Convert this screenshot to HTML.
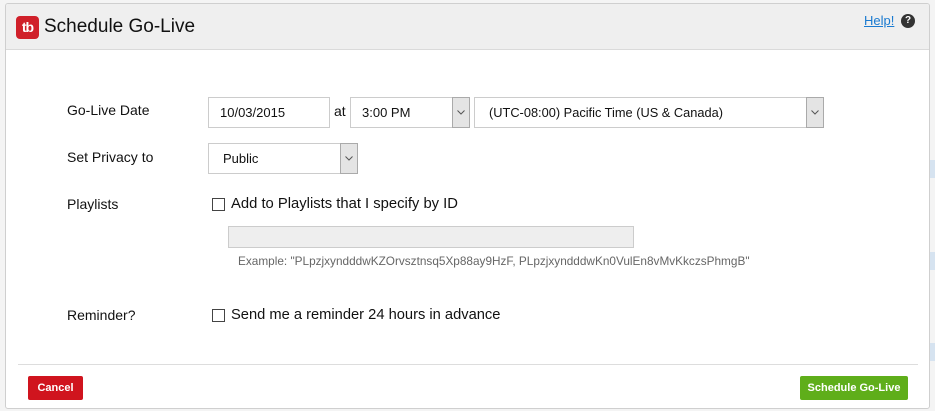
<!DOCTYPE html>
<html><head><meta charset="utf-8"><style>
*{box-sizing:border-box;margin:0;padding:0}
body{width:935px;height:411px;background:#f4f4f4;font-family:"Liberation Sans",Arial,sans-serif;position:relative;overflow:hidden;color:#111}
.dlg{position:absolute;left:5px;top:3px;width:925px;height:406px;background:#fff;border:1px solid #cfcfcf;border-radius:3px;overflow:hidden}
.hdr{position:absolute;left:0;top:0;right:0;height:46px;background:#efefef;border-bottom:1px solid #dadada}
.a{position:absolute}
.lbl{font-size:14px;color:#111}
.inp{position:absolute;border:1px solid #ccc;background:#fff;font-size:13px;padding-left:11px;display:flex;align-items:center}
.arr{position:absolute;right:-1px;top:-1px;bottom:-1px;width:18px;background:#e4e4e4;border:1px solid #aaa;display:flex;align-items:center;justify-content:center}
.cb{position:absolute;width:13px;height:13px;border:1px solid #444;background:#fff}
.btn{position:absolute;color:#fff;font-size:11px;font-weight:bold;display:flex;align-items:center;justify-content:center;border-radius:2px}
</style></head><body>
<div class="a" style="left:930px;top:160px;width:5px;height:18px;background:#d6e3f0"></div>
<div class="a" style="left:930px;top:252px;width:5px;height:18px;background:#d6e3f0"></div>
<div class="a" style="left:930px;top:343px;width:5px;height:18px;background:#d6e3f0"></div>
<div class="dlg">
<div class="hdr">
 <div class="a" style="left:10px;top:12px;width:23px;height:23px;background:#d0202a;border-radius:4px;color:#fff;font-weight:bold;font-size:14px;line-height:23px;text-align:center;letter-spacing:-1px">tb</div>
 <div class="a" style="left:38px;top:12px;font-size:19px;color:#111">Schedule Go-Live</div>
 <div class="a" style="left:858px;top:9px;font-size:13px;color:#1a7ad0;text-decoration:underline">Help!</div>
 <div class="a" style="left:895px;top:10px;width:14px;height:14px;border-radius:50%;background:#333;color:#fff;font-size:10px;font-weight:bold;text-align:center;line-height:14px">?</div>
</div>
<div class="a lbl" style="left:61px;top:98px">Go-Live Date</div>
<div class="a lbl" style="left:61px;top:145px">Set Privacy to</div>
<div class="a lbl" style="left:61px;top:192px">Playlists</div>
<div class="a lbl" style="left:61px;top:303px">Reminder?</div>
<div class="inp" style="left:202px;top:93px;width:122px;height:31px">10/03/2015</div>
<div class="a lbl" style="left:328px;top:99px">at</div>
<div class="inp" style="left:344px;top:93px;width:120px;height:31px">3:00 PM<div class="arr"><svg width="8" height="5"><path d="M0.5 0.5L4 4L7.5 0.5" fill="none" stroke="#555"/></svg></div></div>
<div class="inp" style="left:468px;top:93px;width:350px;height:31px;padding-left:14px;font-size:12.8px">(UTC-08:00) Pacific Time (US &amp; Canada)<div class="arr"><svg width="8" height="5"><path d="M0.5 0.5L4 4L7.5 0.5" fill="none" stroke="#555"/></svg></div></div>
<div class="inp" style="left:202px;top:139px;width:150px;height:31px;padding-left:14px">Public<div class="arr"><svg width="8" height="5"><path d="M0.5 0.5L4 4L7.5 0.5" fill="none" stroke="#555"/></svg></div></div>
<div class="cb" style="left:206px;top:194px"></div>
<div class="a lbl" style="left:225px;top:192px;font-size:14.8px">Add to Playlists that I specify by ID</div>
<div class="a" style="left:222px;top:222px;width:406px;height:22px;background:#eee;border:1px solid #ccc"></div>
<div class="a" style="left:232px;top:250px;font-size:11.8px;color:#666">Example: "PLpzjxyndddwKZOrvsztnsq5Xp88ay9HzF, PLpzjxyndddwKn0VulEn8vMvKkczsPhmgB"</div>
<div class="cb" style="left:206px;top:305px"></div>
<div class="a lbl" style="left:225px;top:303px;font-size:14.7px">Send me a reminder 24 hours in advance</div>
<div class="a" style="left:12px;top:360px;width:900px;height:1px;background:#ddd"></div>
<div class="btn" style="left:22px;top:372px;width:55px;height:24px;background:#d0141e">Cancel</div>
<div class="btn" style="left:794px;top:372px;width:108px;height:24px;background:#5fae1a">Schedule Go-Live</div>
</div>
</body></html>
